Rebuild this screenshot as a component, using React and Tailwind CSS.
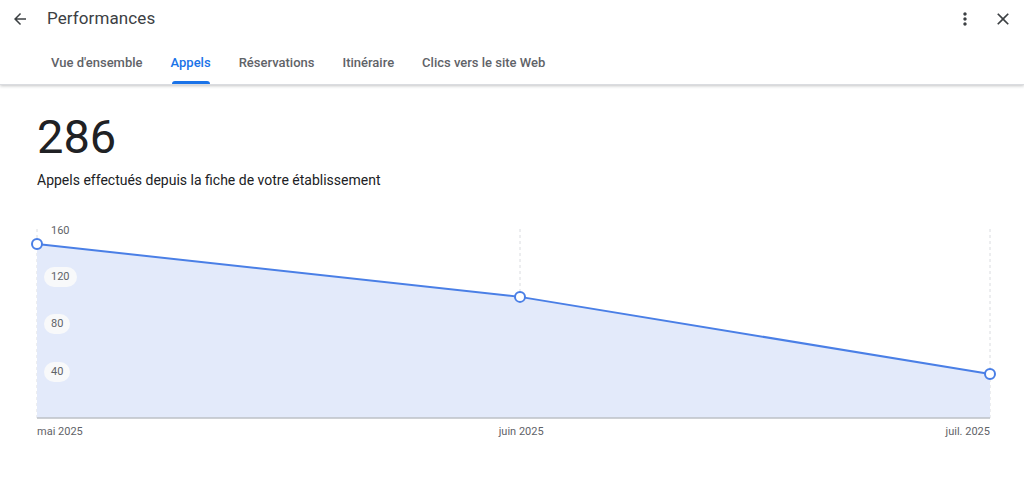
import React from "react";

const tabs = ["Vue d'ensemble", "Appels", "Réservations", "Itinéraire", "Clics vers le site Web"];

const W = 953;
const base = 197; // y of x-axis inside svg (417 - 220)
const yOf = (v) => base - (v / 40) * 47.5;
const points = [
  { x: 0, v: 146.5 },
  { x: 483, v: 102 },
  { x: 953, v: 37 },
];

const Chart = () => {
  const pts = points.map((p) => [p.x, yOf(p.v)]);
  const line = pts.map((p) => p.join(",")).join(" ");
  const area = `0,${base} ${line} ${W},${base}`;
  return (
    <div className="relative w-[953px] h-[220px]">
      <svg width={W + 8} height="200" className="absolute left-[-4px] top-0 overflow-visible">
        <g transform="translate(4,0)">
          {[0, 483, 953].map((x) => (
            <line key={x} x1={x} x2={x} y1="8" y2={base} stroke="#dadce0" strokeDasharray="3 3" />
          ))}
          <polygon points={area} fill="#e3eafa" />
          <line x1="0" x2={W} y1={base} y2={base} stroke="#bdc1c6" strokeWidth="1.5" />
          <polyline points={line} fill="none" stroke="#4a7fe6" strokeWidth="2" />
          {pts.map(([x, y]) => (
            <circle key={x} cx={x} cy={y} r="5" fill="#fff" stroke="#4a7fe6" strokeWidth="2" />
          ))}
        </g>
      </svg>
      {[
        { v: 160, top: "top-[0px]", pill: false },
        { v: 120, top: "top-[46px]", pill: true },
        { v: 80, top: "top-[93px]", pill: true },
        { v: 40, top: "top-[141px]", pill: true },
      ].map((l) => (
        <div
          key={l.v}
          className={`absolute left-[7px] ${l.top} px-[7px] h-[20px] flex items-center rounded-full text-[11px] text-[#5f6368] ${
            l.pill ? "bg-[#f8f9fa]" : ""
          }`}
        >
          {l.v}
        </div>
      ))}
      <div className="absolute top-[203px] left-0 right-0 flex justify-between text-[11px] text-[#5f6368]">
        <span>mai 2025</span>
        <span className="translate-x-[7px]">juin 2025</span>
        <span>juil. 2025</span>
      </div>
    </div>
  );
};

export default function App() {
  return (
    <div className="w-[1024px] h-[478px] bg-white font-['Roboto',sans-serif] overflow-hidden">
      <div className="shadow-[0_1px_3px_rgba(60,64,67,0.3)] border-b border-[#dadce0] relative z-10">
        <div className="h-[37px] flex items-center pl-[11px] pr-[11px]">
          <svg width="18" height="18" viewBox="0 0 24 24" className="mr-[18px]">
            <path d="M20 11H7.83l5.59-5.59L12 4l-8 8 8 8 1.41-1.41L7.83 13H20v-2z" fill="#3c4043" />
          </svg>
          <span className="text-[17px] text-[#3c4043] tracking-[0.1px]">Performances</span>
          <div className="ml-auto flex items-center gap-[18px]">
            <svg width="20" height="20" viewBox="0 0 24 24">
              <path d="M12 8c1.1 0 2-.9 2-2s-.9-2-2-2-2 .9-2 2 .9 2 2 2zm0 2c-1.1 0-2 .9-2 2s.9 2 2 2 2-.9 2-2-.9-2-2-2zm0 6c-1.1 0-2 .9-2 2s.9 2 2 2 2-.9 2-2-.9-2-2-2z" fill="#3c4043" />
            </svg>
            <svg width="20" height="20" viewBox="0 0 24 24">
              <path d="M19 6.41 17.59 5 12 10.59 6.41 5 5 6.41 10.59 12 5 17.59 6.41 19 12 13.41 17.59 19 19 17.59 13.41 12z" fill="#3c4043" />
            </svg>
          </div>
        </div>
        <div className="flex pl-[51px] gap-[28px] h-[47px]">
          {tabs.map((t) => (
            <div
              key={t}
              className={`relative flex items-center pt-[5px] text-[13px] font-medium ${
                t === "Appels" ? "text-[#1a73e8]" : "text-[#5f6368]"
              }`}
            >
              {t}
              {t === "Appels" && (
                <div className="absolute bottom-0 left-[1px] right-[1px] h-[3px] rounded-t-[3px] bg-[#1a73e8]" />
              )}
            </div>
          ))}
        </div>
      </div>
      <div className="pl-[37px] pt-[24px]">
        <div className="text-[47px] leading-[56px] text-[#202124]">286</div>
        <div className="mt-[5px] text-[14px] text-[#202124]">Appels effectués depuis la fiche de votre établissement</div>
        <div className="mt-[30px]">
          <Chart />
        </div>
      </div>
    </div>
  );
}
